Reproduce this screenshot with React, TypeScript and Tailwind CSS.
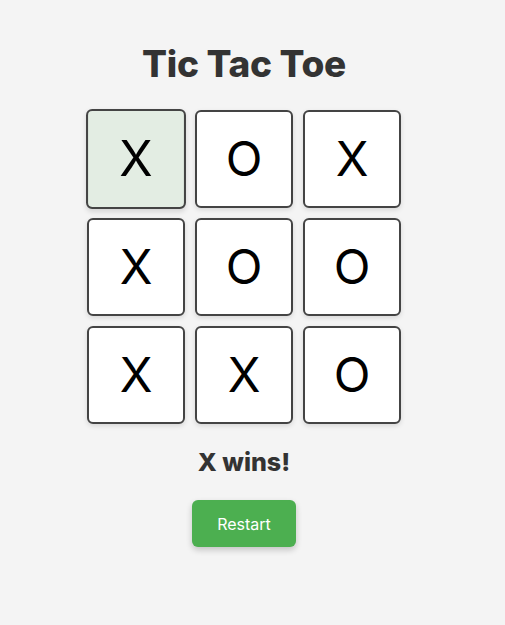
import React from 'react';

const board = ['X', 'O', 'X', 'X', 'O', 'O', 'X', 'X', 'O'];

const App: React.FC = () => {
  return (
    <div
      className="min-h-[625px] w-full bg-[#f4f4f4] pr-[17px] text-[#333]"
      style={{ fontFamily: 'Inter, "Noto Sans", sans-serif' }}
    >
      <div className="flex flex-col items-center pt-[40px]">
        <h1 className="text-[37px] font-extrabold leading-[48px] tracking-[-0.3px]">Tic Tac Toe</h1>

        {/* Board */}
        <div className="mt-[22px] grid grid-cols-[repeat(3,98px)] gap-[10px]">
          {board.map((cell, i) => (
            <button
              key={i}
              className={`flex h-[98px] w-[98px] items-center justify-center rounded-[6px] border-2 border-[#444] text-[48px] font-normal text-black shadow-[0_2px_5px_rgba(0,0,0,0.12)] ${
                i === 0 ? 'scale-[1.02] bg-[#e3ede3]' : 'bg-white'
              }`}
            >
              {cell}
            </button>
          ))}
        </div>

        <p className="mt-[22px] text-[25px] font-extrabold leading-[32px]">X wins!</p>

        <button className="mt-[22px] h-[47px] w-[104px] rounded-[6px] bg-[#4caf50] text-[16px] text-white shadow-[0_3px_6px_rgba(0,0,0,0.2)]">
          Restart
        </button>
      </div>
    </div>
  );
};

export default App;
